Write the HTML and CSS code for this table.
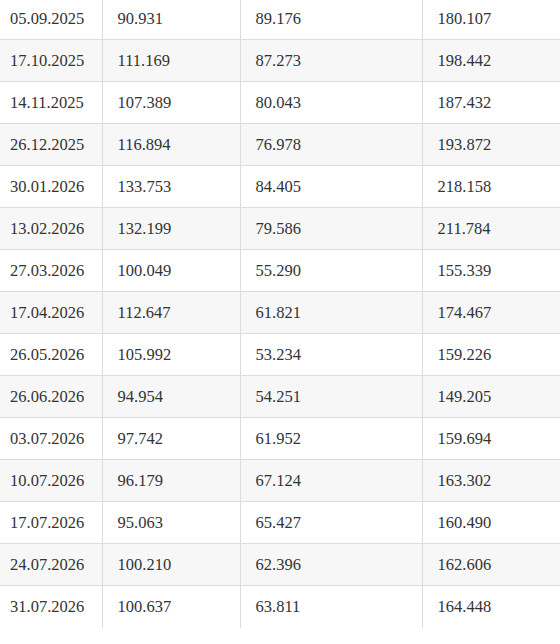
FILE: index.html
```html
<!DOCTYPE html>
<html>
<head>
<meta charset="utf-8">
<link rel="stylesheet" href="styles.css">
</head>
<body>
<table class="data">
<colgroup><col class="c1"><col class="c2"><col class="c3"><col class="c4"></colgroup>
<tbody>
<tr><td>05.09.2025</td><td>90.931</td><td>89.176</td><td>180.107</td></tr>
<tr><td>17.10.2025</td><td>111.169</td><td>87.273</td><td>198.442</td></tr>
<tr><td>14.11.2025</td><td>107.389</td><td>80.043</td><td>187.432</td></tr>
<tr><td>26.12.2025</td><td>116.894</td><td>76.978</td><td>193.872</td></tr>
<tr><td>30.01.2026</td><td>133.753</td><td>84.405</td><td>218.158</td></tr>
<tr><td>13.02.2026</td><td>132.199</td><td>79.586</td><td>211.784</td></tr>
<tr><td>27.03.2026</td><td>100.049</td><td>55.290</td><td>155.339</td></tr>
<tr><td>17.04.2026</td><td>112.647</td><td>61.821</td><td>174.467</td></tr>
<tr><td>26.05.2026</td><td>105.992</td><td>53.234</td><td>159.226</td></tr>
<tr><td>26.06.2026</td><td>94.954</td><td>54.251</td><td>149.205</td></tr>
<tr><td>03.07.2026</td><td>97.742</td><td>61.952</td><td>159.694</td></tr>
<tr><td>10.07.2026</td><td>96.179</td><td>67.124</td><td>163.302</td></tr>
<tr><td>17.07.2026</td><td>95.063</td><td>65.427</td><td>160.490</td></tr>
<tr><td>24.07.2026</td><td>100.210</td><td>62.396</td><td>162.606</td></tr>
<tr><td>31.07.2026</td><td>100.637</td><td>63.811</td><td>164.448</td></tr>
</tbody>
</table>
</body>
</html>
```
FILE: styles.css
```css
html, body {
  margin: 0;
  padding: 0;
  background: #fff;
  overflow: hidden;
}
body {
  font-family: "Liberation Serif", "DejaVu Serif", serif;
  color: #333;
}
.data {
  border-collapse: collapse;
  table-layout: fixed;
  width: 566px;
  margin: -3px 0 0 -5px;
  font-size: 16.5px;
}
.c1 { width: 107px; }
.c2 { width: 138px; }
.c3 { width: 182px; }
.c4 { width: 139px; }
.data td {
  height: 42px;
  padding: 0 15px;
  box-sizing: border-box;
  border-top: 1px solid #dcdcdc;
  border-left: 1px solid #dcdcdc;
  vertical-align: middle;
  white-space: nowrap;
}
.data td:first-child { border-left: none; }
.data tr:nth-child(even) td { background: #f7f7f7; }
```
